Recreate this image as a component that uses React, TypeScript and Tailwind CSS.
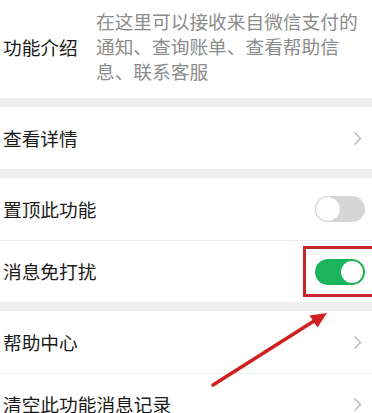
import { ReactNode } from 'react'

function Chevron() {
  return (
    <svg width="9" height="15" viewBox="0 0 9 15" fill="none">
      <path d="M1.5 1.5 L7.5 7.5 L1.5 13.5" stroke="#b4b4b4" strokeWidth="1.3" />
    </svg>
  )
}

function Toggle({ on }: { on: boolean }) {
  return on ? (
    <div className="w-[50px] h-[26px] rounded-full bg-[#1bb45a] flex items-center justify-end p-[2px]">
      <div className="w-[22px] h-[22px] rounded-full bg-white" />
    </div>
  ) : (
    <div className="w-[50px] h-[26px] rounded-full bg-[#d6d6d6] flex items-center justify-start">
      <div className="w-[26px] h-[26px] rounded-full bg-white border border-[#d0d0d0]" />
    </div>
  )
}

function Row({ label, right, border }: { label: string; right: ReactNode; border?: boolean }) {
  return (
    <div className={`flex items-center justify-between h-[62px] bg-white pl-[3px] ${border ? 'border-t border-[#ececec]' : ''}`}>
      <span className="text-[18.7px] text-[#1a1a1a]">{label}</span>
      {right}
    </div>
  )
}

export default function App() {
  const arrow = (
    <div className="w-[27px] flex justify-center mr-[1px]">
      <Chevron />
    </div>
  )
  const toggleWrap = (on: boolean) => (
    <div className="mr-[7px]">
      <Toggle on={on} />
    </div>
  )

  return (
    <div className="relative w-[372px] h-[413px] overflow-hidden bg-[#eeeeee] font-['Noto_Sans_CJK_SC',sans-serif]">
      <div className="flex items-center h-[98px] bg-white pl-[3px]">
        <div className="w-[93px] -mt-[4px] text-[18.7px] text-[#1a1a1a]">功能介绍</div>
        <div className="-mt-[8px] text-[18.7px] leading-[25px] text-[#8c8c8c] whitespace-nowrap">
          在这里可以接收来自微信支付的
          <br />
          通知、查询账单、查看帮助信
          <br />
          息、联系客服
        </div>
      </div>

      <div className="h-[9px]" />
      <Row label="查看详情" right={arrow} />

      <div className="h-[9px]" />
      <Row label="置顶此功能" right={toggleWrap(false)} />
      <Row label="消息免打扰" right={toggleWrap(true)} border />

      <div className="h-[9px]" />
      <Row label="帮助中心" right={arrow} />
      <Row label="清空此功能消息记录" right={arrow} border />

      <div className="absolute left-[303px] top-[246px] w-[80px] h-[51px] border-[3px] border-[#c3262d]" />

      <svg className="absolute inset-0" width="372" height="413" viewBox="0 0 372 413">
        <line x1="213" y1="385" x2="314" y2="321" stroke="#d11f1f" strokeWidth="3.5" strokeLinecap="round" />
        <polygon points="327,313 317.5,327.5 309.5,315.5" fill="#d11f1f" />
      </svg>
    </div>
  )
}
